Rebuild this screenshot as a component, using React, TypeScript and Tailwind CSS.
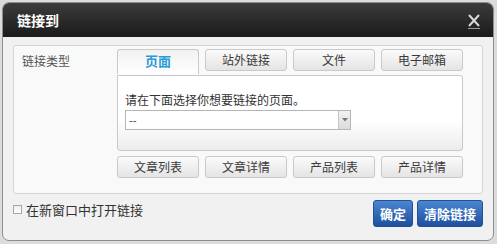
const font = { fontFamily: '"Noto Sans CJK SC", "Noto Sans", sans-serif' };

const tabs = ["页面", "站外链接", "文件", "电子邮箱"];
const quick = ["文章列表", "文章详情", "产品列表", "产品详情"];

const btn =
  "flex h-[22px] w-[82px] items-center justify-center rounded-[3px] border border-[#c9c9c9] bg-gradient-to-b from-[#fbfbfb] to-[#e4e4e4] text-[12px] text-[#3a3a3a]";

export default function App() {
  return (
    <div className="h-[244px] w-[497px] bg-[#dcdcdc] pl-[2px] pr-[3px] pt-[2px] pb-[3px]" style={font}>
      <div className="flex h-full flex-col overflow-hidden rounded-[7px] border border-[#8e8e8e] bg-[#f1f1f1]">
        <div className="flex h-[34px] items-center justify-between bg-gradient-to-b from-[#3c3c3c] to-[#1b1b1b] pl-[14px] pr-[12px]">
          <span className="text-[14px] font-bold text-white">链接到</span>
          <svg width="14" height="16" viewBox="0 0 14 16" className="mt-[2px]">
            <path d="M2 2 L12 13 M12 2 L2 13" stroke="#d8d8d8" strokeWidth="2" />
            <path d="M1 15.5 H13" stroke="#9a9a9a" strokeWidth="1" />
          </svg>
        </div>

        <div className="flex flex-1 flex-col px-[10px] pt-[8px]">
          <div className="flex h-[149px] rounded-[3px] border border-[#d5d5d5] bg-[#f9f9f9] pt-[3px]">
            <div className="w-[103px] pl-[8px] pt-[3px] text-[12px] text-[#555]">链接类型</div>
            <div className="flex w-[346px] flex-col">
              <div className="flex gap-[6px]">
                {tabs.map((t, i) =>
                  i === 0 ? (
                    <div
                      key={t}
                      className="relative z-10 -mb-[1px] flex h-[25px] w-[82px] items-center justify-center rounded-t-[3px] border border-b-0 border-[#c9c9c9] bg-gradient-to-b from-[#f1f1f1] to-white pb-[3px] text-[13px] font-bold text-[#2a9ad6]"
                    >
                      {t}
                    </div>
                  ) : (
                    <div key={t} className={btn}>
                      {t}
                    </div>
                  )
                )}
              </div>
              <div className="mt-[2px] h-[76px] rounded-b-[3px] rounded-tr-[3px] border border-[#c9c9c9] bg-gradient-to-b from-white from-60% to-[#ececec] px-[7px] pt-[16px]">
                <div className="text-[12px] leading-[16px] text-[#333]">请在下面选择你想要链接的页面。</div>
                <div className="mt-[2px] flex h-[20px] w-[226px] items-center border border-[#b5b5b5] bg-white">
                  <span className="flex-1 pl-[3px] text-[11px] text-[#333]">--</span>
                  <div className="flex h-full w-[12px] items-center justify-center border-l border-[#c5c5c5] bg-gradient-to-b from-[#f2f2f2] to-[#dcdcdc]">
                    <svg width="6" height="4" viewBox="0 0 6 4">
                      <path d="M0 0 H6 L3 3.5 Z" fill="#6a7a8c" />
                    </svg>
                  </div>
                </div>
              </div>
              <div className="mt-[5px] flex gap-[6px]">
                {quick.map((t) => (
                  <div key={t} className={btn}>
                    {t}
                  </div>
                ))}
              </div>
            </div>
          </div>

          <div className="mt-[6px] flex items-start justify-between">
            <label className="flex items-center gap-[4px] text-[13px] text-[#333]">
              <span className="h-[9px] w-[9px] border border-[#a8a8a8] bg-gradient-to-b from-[#eee] to-white" />
              在新窗口中打开链接
            </label>
            <div className="flex gap-[4px]">
              <div className="flex h-[27px] items-center rounded-[3px] border border-[#234f95] bg-gradient-to-b from-[#4a86d2] to-[#1f4f9f] px-[6px] text-[13px] font-bold text-white">
                确定
              </div>
              <div className="flex h-[27px] items-center rounded-[3px] border border-[#234f95] bg-gradient-to-b from-[#4a86d2] to-[#1f4f9f] px-[6px] text-[13px] font-bold text-white">
                清除链接
              </div>
            </div>
          </div>
        </div>
      </div>
    </div>
  );
}
